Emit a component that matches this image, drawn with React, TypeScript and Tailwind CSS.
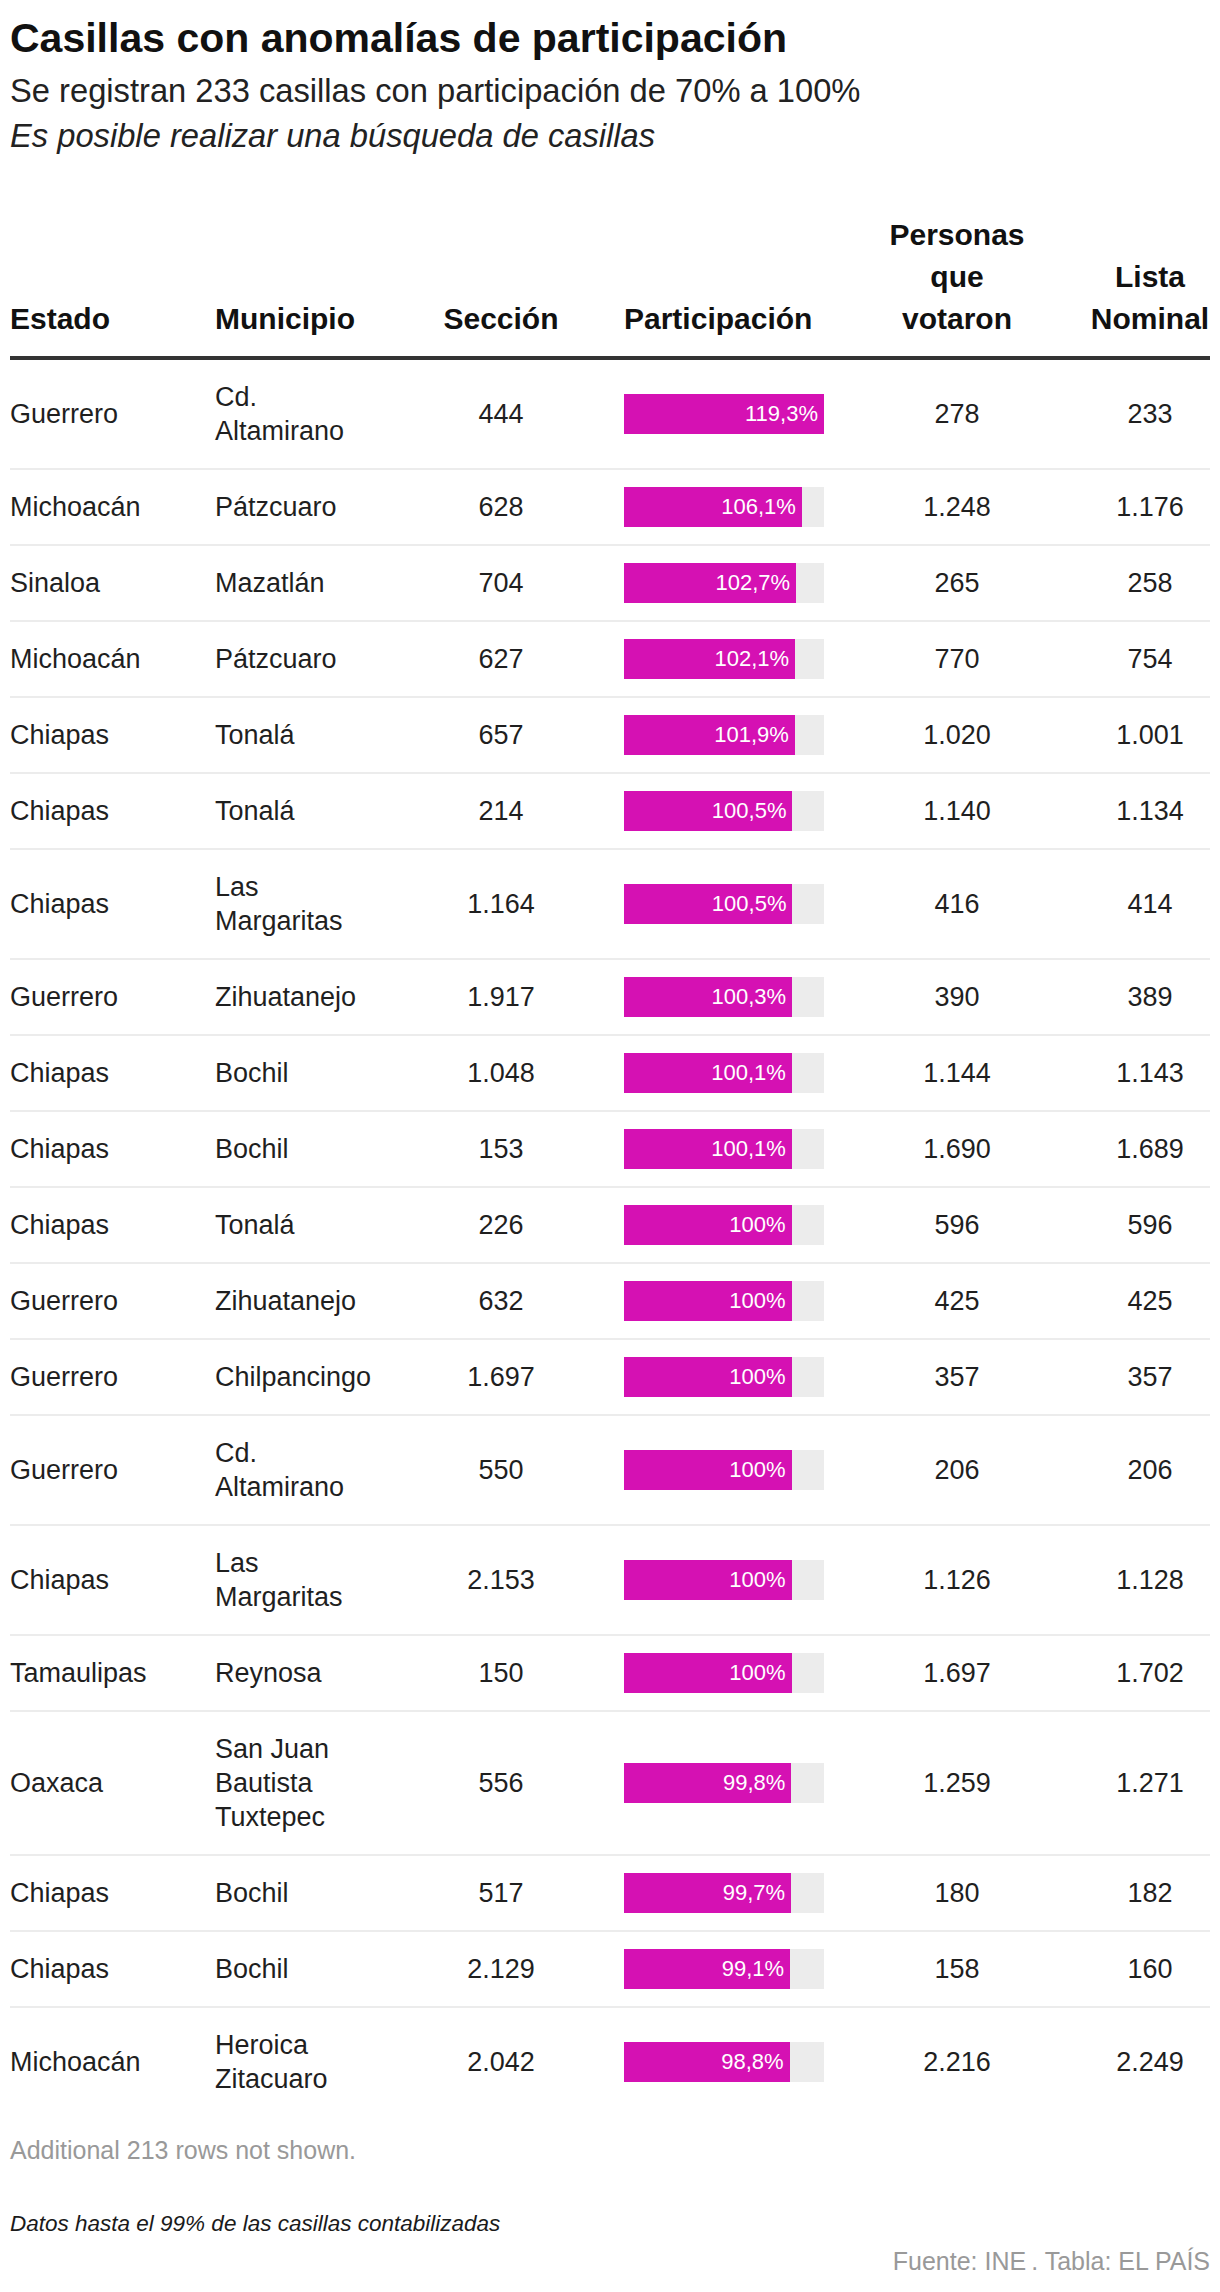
import React from "react";

type Row = [string, string, string, number, string, string];

const rows: Row[] = [
  ["Guerrero", "Cd. Altamirano", "444", 119.3, "278", "233"],
  ["Michoacán", "Pátzcuaro", "628", 106.1, "1.248", "1.176"],
  ["Sinaloa", "Mazatlán", "704", 102.7, "265", "258"],
  ["Michoacán", "Pátzcuaro", "627", 102.1, "770", "754"],
  ["Chiapas", "Tonalá", "657", 101.9, "1.020", "1.001"],
  ["Chiapas", "Tonalá", "214", 100.5, "1.140", "1.134"],
  ["Chiapas", "Las Margaritas", "1.164", 100.5, "416", "414"],
  ["Guerrero", "Zihuatanejo", "1.917", 100.3, "390", "389"],
  ["Chiapas", "Bochil", "1.048", 100.1, "1.144", "1.143"],
  ["Chiapas", "Bochil", "153", 100.1, "1.690", "1.689"],
  ["Chiapas", "Tonalá", "226", 100, "596", "596"],
  ["Guerrero", "Zihuatanejo", "632", 100, "425", "425"],
  ["Guerrero", "Chilpancingo", "1.697", 100, "357", "357"],
  ["Guerrero", "Cd. Altamirano", "550", 100, "206", "206"],
  ["Chiapas", "Las Margaritas", "2.153", 100, "1.126", "1.128"],
  ["Tamaulipas", "Reynosa", "150", 100, "1.697", "1.702"],
  ["Oaxaca", "San Juan Bautista Tuxtepec", "556", 99.8, "1.259", "1.271"],
  ["Chiapas", "Bochil", "517", 99.7, "180", "182"],
  ["Chiapas", "Bochil", "2.129", 99.1, "158", "160"],
  ["Michoacán", "Heroica Zitacuaro", "2.042", 98.8, "2.216", "2.249"],
];

const fmt = (v: number) =>
  Number.isInteger(v) ? `${v}%` : `${v.toFixed(1).replace(".", ",")}%`;

const grid = "grid grid-cols-[205px_205px_204px_246px_174px_166px]";

export default function App() {
  return (
    <div className="w-[1220px] bg-white px-[10px] pt-[14px] font-['Liberation_Sans',Arial,sans-serif] text-[#1a1a1a]">
      <h1 className="text-[41px] font-bold leading-[49px] text-[#111]">
        Casillas con anomalías de participación
      </h1>
      <p className="mt-[5px] text-[32.7px] leading-[45px] text-[#222]">
        Se registran 233 casillas con participación de 70% a 100%
      </p>
      <p className="text-[32.7px] italic leading-[45px] text-[#222]">
        Es posible realizar una búsqueda de casillas
      </p>

      <div className="mt-[56px]">
        <div
          className={`${grid} items-end border-b-[4px] border-[#333] pb-[16px] text-[30px] font-bold leading-[42px] text-[#111]`}
        >
          <div>Estado</div>
          <div>Municipio</div>
          <div className="pr-[42px] text-center">Sección</div>
          <div>Participación</div>
          <div className="px-[12px] text-center">Personas que votaron</div>
          <div className="pl-[46px] text-center">Lista Nominal</div>
        </div>

        {rows.map((r, i) => (
          <div
            key={i}
            className={`${grid} items-center py-[20px] text-[27px] leading-[34px] text-[#1f1f1f] ${
              i === rows.length - 1 ? "border-b-0" : "border-b-2 border-[#ececec]"
            }`}
          >
            <div>{r[0]}</div>
            <div className="pr-[40px]">{r[1]}</div>
            <div className="pr-[42px] text-center">{r[2]}</div>
            <div className="flex h-[34px] items-center">
              <div className="flex h-[40px] w-[200px] shrink-0 bg-[#ececec]">
                <div
                  className="flex h-full items-center justify-end bg-[#d511b3] pr-[6px] text-[22px] leading-none text-white"
                  style={{ width: `${(r[3] / 119.3) * 200}px` }}
                >
                  {fmt(r[3])}
                </div>
              </div>
            </div>
            <div className="px-[12px] text-center">{r[4]}</div>
            <div className="pl-[46px] text-center">{r[5]}</div>
          </div>
        ))}
      </div>

      <p className="mt-[19px] text-[25px] leading-[30px] text-[#999]">
        Additional 213 rows not shown.
      </p>
      <p className="mt-[45px] text-[22.5px] italic leading-[28px] text-[#1a1a1a]">
        Datos hasta el 99% de las casillas contabilizadas
      </p>
      <p className="mt-[8px] text-right text-[25px] leading-[30px] text-[#999]">
        Fuente: INE{"\u2009"}. Tabla: EL PAÍS
      </p>
    </div>
  );
}
